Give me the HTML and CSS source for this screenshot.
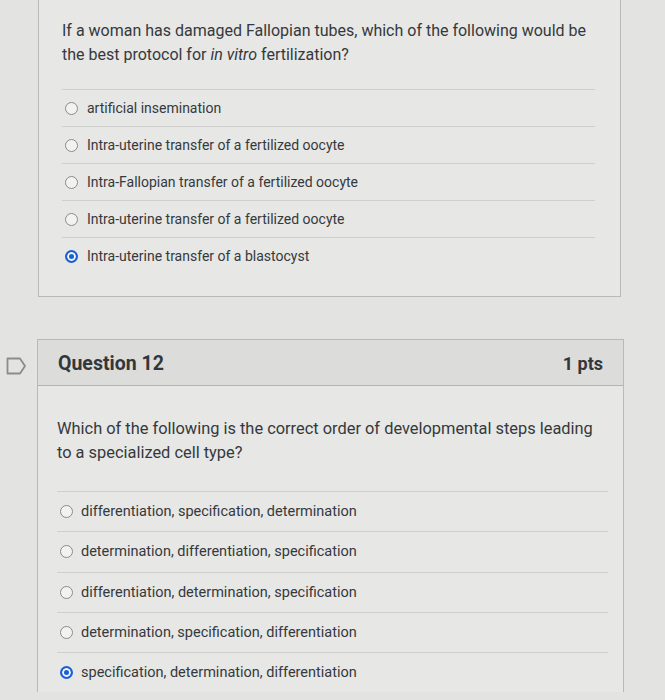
FILE: index.html
```html
<!DOCTYPE html>
<html>
<head>
<meta charset="utf-8">
<link rel="stylesheet" href="styles.css">
</head>
<body>
<div class="page">
  <section class="card card-first">
    <div class="body-first">
      <p class="question">If a woman has damaged Fallopian tubes, which of the following would be the best protocol for <em>in vitro</em> fertilization?</p>
      <ul class="answers answers-first">
        <li><span class="radio"></span>artificial insemination</li>
        <li><span class="radio"></span>Intra-uterine transfer of a fertilized oocyte</li>
        <li><span class="radio"></span>Intra-Fallopian transfer of a fertilized oocyte</li>
        <li><span class="radio"></span>Intra-uterine transfer of a fertilized oocyte</li>
        <li><span class="radio checked"></span>Intra-uterine transfer of a blastocyst</li>
      </ul>
    </div>
  </section>

  <div class="q-row">
    <svg class="flag" width="21" height="18" viewBox="0 0 21 18">
      <path d="M1.5 1.5 H14 L19 9 L14 16.5 H1.5 Z" fill="none" stroke="#8a8c8e" stroke-width="1.8" stroke-linejoin="round"/>
    </svg>
    <section class="card card-second">
      <header class="q-header">
        <h2>Question 12</h2>
        <span class="pts">1 pts</span>
      </header>
      <div class="body-second">
        <p class="question q-second">Which of the following is the correct order of developmental steps leading to a specialized cell type?</p>
        <ul class="answers answers-second">
          <li><span class="radio"></span>differentiation, specification, determination</li>
          <li><span class="radio"></span>determination, differentiation, specification</li>
          <li><span class="radio"></span>differentiation, determination, specification</li>
          <li><span class="radio"></span>determination, specification, differentiation</li>
          <li><span class="radio checked"></span>specification, determination, differentiation</li>
        </ul>
      </div>
    </section>
  </div>
</div>
</body>
</html>
```

FILE: styles.css
```css
* { box-sizing: border-box; }
html, body {
  margin: 0;
  padding: 0;
  background: #e3e3e1;
  height: 700px;
  overflow: hidden;
}
body {
  font-family: Roboto, "Liberation Sans", sans-serif;
  color: #35393d;
}
.page {
  margin-top: -10px;
}
.card {
  background: #e7e7e5;
  border: 1px solid #b9bab8;
}
.card-first {
  margin-left: 38px;
  width: 583px;
}
.body-first {
  padding: 28px 25px 22px 23px;
}
.question {
  margin: 0;
  font-size: 16px;
  line-height: 24px;
}
.question em { font-style: italic; }
.q-second {
  font-size: 16.4px;
}
.answers {
  list-style: none;
  margin: 0;
  padding: 0;
}
.answers li {
  display: flex;
  align-items: center;
  border-top: 1px solid #cfd0ce;
}
.answers-first {
  margin-top: 22px;
}
.answers-first li {
  height: 37px;
  font-size: 14px;
  padding-left: 3px;
}
.answers-first .radio { margin-right: 9px; }
.radio {
  width: 13px;
  height: 13px;
  border-radius: 50%;
  border: 1px solid #888b8e;
  background: #f2f2f0;
  flex: none;
}
.radio.checked {
  border: 2px solid #1b5fd6;
  background: #1b5fd6;
  box-shadow: inset 0 0 0 2px #f4f4f2;
}
.q-row {
  display: flex;
  align-items: flex-start;
  margin-top: 42px;
}
.flag {
  margin: 18px 0 0 6px;
  flex: none;
}
.card-second {
  margin-left: 10px;
  width: 587px;
  border-bottom: none;
}
.q-header {
  display: flex;
  justify-content: space-between;
  align-items: center;
  height: 46px;
  padding: 2px 20px 0 20px;
  background: #dcdcda;
  border-bottom: 1px solid #b3b4b2;
}
.q-header h2 {
  margin: 0;
  font-size: 19.5px;
  font-weight: 700;
  color: #33373b;
}
.pts {
  font-size: 18px;
  font-weight: 700;
  color: #33373b;
}
.body-second {
  padding: 31px 24px 0 19px;
}
.answers-second {
  margin-top: 26px;
  margin-right: -9px;
}
.answers-second li {
  height: 40.3px;
  font-size: 14.5px;
  padding-left: 3px;
}
.answers-second .radio { margin-right: 8px; }
```
